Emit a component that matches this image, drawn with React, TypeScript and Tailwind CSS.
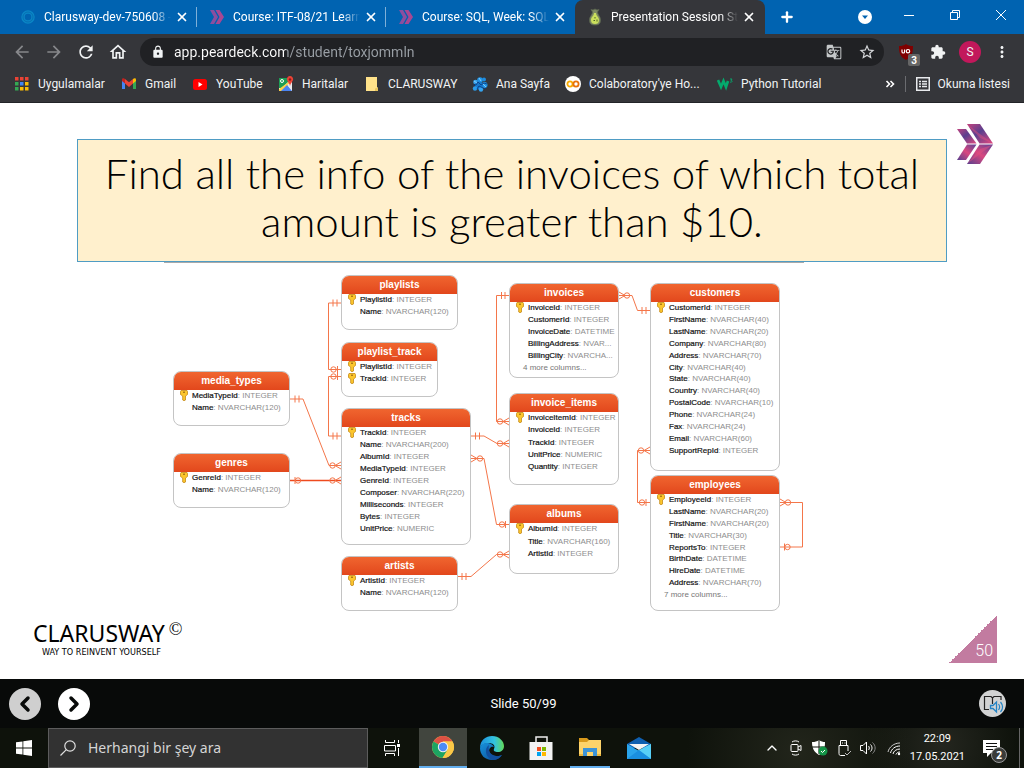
import React, { type ReactNode } from 'react';
import { X, Plus, ChevronUp, ChevronLeft, ChevronRight } from 'lucide-react';
import { MdArrowBack, MdArrowForward, MdRefresh, MdOutlineHome, MdLock, MdStarBorder, MdExtension, MdMoreVert, MdGTranslate } from 'react-icons/md';

type IconProps = { className?: string };

function ClarusIcon({ className = '' }: IconProps) {
  return (
    <svg viewBox="0 0 36 40" className={className} aria-hidden="true">
      <defs>
        <linearGradient id="cwA" x1="0" y1="0" x2="1" y2="1">
          <stop offset="0" stopColor="#c2437f" />
          <stop offset="0.45" stopColor="#5a3f8e" />
          <stop offset="1" stopColor="#e0487f" />
        </linearGradient>
        <linearGradient id="cwB" x1="1" y1="0" x2="0" y2="1">
          <stop offset="0" stopColor="#5c4296" />
          <stop offset="0.5" stopColor="#d9487f" />
          <stop offset="1" stopColor="#55408f" />
        </linearGradient>
      </defs>
      <path d="M10 0h13l13 19.5H22.5z" fill="url(#cwA)" />
      <path d="M22.5 20.5H36L23 40H10z" fill="url(#cwB)" />
      <path d="M0 5h9l10.500 14.500H10z" fill="url(#cwA)" />
      <path d="M10 20.500h9.500L9 36H0z" fill="url(#cwB)" />
      <path d="M10 0l13 10 13 9.500L23 14z" fill="#e3507f" opacity=".45" />
      <path d="M10 40l13-15 13-4.500L23 30z" fill="#e3507f" opacity=".5" />
    </svg>
  );
}

function TabChevrons() {
  return (
    <svg viewBox="0 0 16 16" className="size-4" aria-hidden="true">
      <path d="M1 1h4l4 7-4 7H1l4-7z" fill="#8a4fa0" />
      <path d="M6.500 1h4l4.500 7-4.500 7h-4l4-7z" fill="#a84792" />
    </svg>
  );
}

function PearIcon() {
  return (
    <svg viewBox="0 0 16 18" className="h-[18px] w-4" aria-hidden="true">
      <path d="M5.500 4L4 1.500l2 .5 2-1 2 1 2-.5L10.500 4c0 3 3 4 3 8s-2 5-5.500 5-5.500-1-5.500-5 3-5 3-8z" fill="#7d8a62" stroke="#5a6550" strokeWidth=".8" />
      <path d="M7 5h2c0 3 3 4 3 7s-2 4-4 4-4-1-4-4 3-4 3-7z" fill="#cbe05c" />
      <path d="M8 9v1.500M10 11.500v2M6.500 12.500h1.500" stroke="#4f6426" />
    </svg>
  );
}

const tabs: { title: string; icon: ReactNode; active?: boolean; divider?: boolean }[] = [
  {
    title: 'Clarusway-dev-750608 -',
    icon: (
      <svg viewBox="0 0 16 16" className="size-4" aria-hidden="true">
        <circle cx="8" cy="8" r="5" fill="none" stroke="#0a86c6" strokeWidth="3.500" />
        <circle cx="8" cy="8" r="5" fill="none" stroke="#0669ad" strokeWidth=".8" />
      </svg>
    ),
    divider: true,
  },
  { title: 'Course: ITF-08/21 Learn', icon: <TabChevrons />, divider: true },
  { title: 'Course: SQL, Week: SQL', icon: <TabChevrons /> },
  { title: 'Presentation Session Stu', icon: <PearIcon />, active: true },
];

function TabStrip() {
  return (
    <header className="flex h-[34px] bg-[#0063b1] pl-2 text-white">
      <div role="tablist" className="flex">
        {tabs.map((t) => (
          <div
            key={t.title}
            className={
              t.active
                ? 'flex w-[190px] items-center rounded-t-lg bg-[#35363a] pl-3'
                : 'flex w-[189px] items-center pl-3'
            }
          >
            {t.icon}
            <button role="tab" aria-selected={!!t.active} className="ml-2 w-[127px] text-left text-xs whitespace-nowrap [mask-image:linear-gradient(to_right,black_86%,transparent)]">
              {t.title}
            </button>
            <button aria-label="Close tab" className="ml-1">
              <X className="size-3.5" strokeWidth={3} />
            </button>
            {t.divider && <span className="ml-auto h-5 w-px bg-[#7fb0d8]" />}
          </div>
        ))}
      </div>
      <button aria-label="New tab" className="ml-[14px]">
        <Plus className="size-4" strokeWidth={3.500} />
      </button>
      <div className="ml-auto flex items-center">
        <button aria-label="Search tabs" className="mr-[14px]">
          <svg viewBox="0 0 14 14" className="size-3.5">
            <circle cx="7" cy="7" r="7" fill="#fff" />
            <path d="M4 5.500h6L7 9z" fill="#0063b1" />
          </svg>
        </button>
        <button aria-label="Minimize" className="flex w-[46px] justify-center pb-1">
          <svg viewBox="0 0 10 10" className="size-2.5"><path d="M0 5.500h10" stroke="#fff" /></svg>
        </button>
        <button aria-label="Restore" className="flex w-[46px] justify-center pb-1">
          <svg viewBox="0 0 10 10" className="size-2.5" fill="none" stroke="#fff"><path d="M.5 2.500h7v7h-7zM2.500 2.500v-2h7v7h-2" /></svg>
        </button>
        <button aria-label="Close" className="flex w-[46px] justify-center pb-1">
          <svg viewBox="0 0 10 10" className="size-2.5" stroke="#fff"><path d="M0 0l10 10M10 0L0 10" /></svg>
        </button>
      </div>
    </header>
  );
}

function Toolbar() {
  return (
    <div className="flex h-9 items-center bg-[#35363a] pr-[13px] pl-3 text-[#f1f3f4]">
      <div className="flex gap-3">
        <button aria-label="Back" className="text-[#87888b]"><MdArrowBack className="size-5" /></button>
        <button aria-label="Forward" className="text-[#87888b]"><MdArrowForward className="size-5" /></button>
        <button aria-label="Reload"><MdRefresh className="size-5" /></button>
        <button aria-label="Home"><MdOutlineHome className="size-5" /></button>
      </div>
      <div className="ml-3 flex h-7 grow items-center rounded-full bg-[#202124] pr-2 pl-[11px]">
        <MdLock className="size-[14px]" />
        <input
          aria-label="Address"
          readOnly
          value="app.peardeck.com/student/toxjommln"
          className="ml-[9px] min-w-0 grow bg-[linear-gradient(to_right,#ffffff_112px,#9aa0a6_112px)] bg-clip-text text-sm text-transparent outline-none"
        />
        <button aria-label="Translate" className="mr-4 text-[#c4c7c9]"><MdGTranslate className="size-4" /></button>
        <button aria-label="Bookmark" className="text-[#d5d7da]"><MdStarBorder className="size-[18px]" /></button>
      </div>
      <button aria-label="uBlock Origin, 3 blocked" className="relative ml-[14px]">
        <svg viewBox="0 0 16 16" className="size-4" aria-hidden="true">
          <path d="M8 0c2 1.500 4 2 7 2 0 7-1 11-7 14C2 13 1 9 1 2c3 0 5-.5 7-2z" fill="#800000" />
          <path d="M4 5.500v2.200a1.300 1.300 0 0 0 2.600 0V5.500" fill="none" stroke="#fff" strokeWidth="1.200" />
          <circle cx="10" cy="7.200" r="1.700" fill="none" stroke="#fff" strokeWidth="1.200" />
        </svg>
        <span className="absolute top-[10px] left-[10px] flex h-3 w-3 items-center justify-center rounded-xs bg-[#666] text-[10px] font-bold text-white">3</span>
      </button>
      <button aria-label="Extensions" className="ml-4"><MdExtension className="size-4" /></button>
      <button aria-label="Profile" className="ml-[13px] flex size-[22px] items-center justify-center rounded-full bg-[#c2185b] text-xs">S</button>
      <button aria-label="Menu" className="ml-3"><MdMoreVert className="size-[18px]" /></button>
    </div>
  );
}

const appColors = ['#ea4335', '#ea4335', '#ea4335', '#34a853', '#4285f4', '#fbbc05', '#34a853', '#fbbc05', '#fbbc05'];

const bookmarks: { label: string; width: string; icon: ReactNode }[] = [
  {
    label: 'Uygulamalar',
    width: 'w-[107px]',
    icon: (
      <svg viewBox="0 0 16 16" className="size-4">
        {appColors.map((c, i) => (
          <rect key={i} x={1 + (i % 3) * 5} y={1 + Math.floor(i / 3) * 5} width="3.500" height="3.500" fill={c} />
        ))}
      </svg>
    ),
  },
  {
    label: 'Gmail',
    width: 'w-[71px]',
    icon: (
      <svg viewBox="0 0 16 16" className="size-4">
        <path d="M1 4v9h3V6z" fill="#4285f4" />
        <path d="M15 4v9h-3V6z" fill="#34a853" />
        <path d="M1 5V3.500C1 2 3 2 4 3v4.500z" fill="#c5221f" />
        <path d="M15 5V3.500C15 2 13 2 12 3v4.500z" fill="#fbbc04" />
        <path d="M4 3l4 3.200L12 3v4.500L8 11 4 7.500z" fill="#ea4335" />
      </svg>
    ),
  },
  {
    label: 'YouTube',
    width: 'w-[86px]',
    icon: (
      <svg viewBox="0 0 16 16" className="size-4">
        <rect x="1" y="3" width="14" height="11" rx="2.500" fill="#f00" />
        <path d="M6.500 6v5l4-2.500z" fill="#fff" />
      </svg>
    ),
  },
  {
    label: 'Haritalar',
    width: 'w-[86px]',
    icon: (
      <svg viewBox="0 0 16 16" className="size-4">
        <path d="M1 2h13v13H1z" fill="#e8eaed" />
        <path d="M1 2h9v4L4 12H1z" fill="#1e9e57" />
        <path d="M1 13L12 5l2 1L4 15H1z" fill="#fdd04b" />
        <path d="M3 15l6-6 5 6z" fill="#4a84f3" />
        <path d="M9.500 8.500L14 6v8.500z" fill="#e8eaed" />
        <path d="M12 0a3.200 3.200 0 0 1 3 4c-.5 2-2.500 3-3 6-.5-3-2.500-4-3-6a3.200 3.200 0 0 1 3-4z" fill="#ea4335" />
        <circle cx="12" cy="3.500" r="1.200" fill="#8e1a1a" />
        <circle cx="4" cy="5" r="1.500" fill="none" stroke="#fff" />
      </svg>
    ),
  },
  {
    label: 'CLARUSWAY',
    width: 'w-[108px]',
    icon: (
      <svg viewBox="0 0 16 16" className="size-4">
        <path d="M2 1h11v10l1 1v3H2z" fill="#ffe28a" />
        <path d="M11 15v-2.500l3-1V15z" fill="#e8c55e" />
      </svg>
    ),
  },
  {
    label: 'Ana Sayfa',
    width: 'w-[93px]',
    icon: (
      <svg viewBox="0 0 16 16" className="size-4">
        <circle cx="8" cy="4" r="2.800" fill="#2196e8" />
        <circle cx="12" cy="3.500" r="2" fill="#1e8ce0" />
        <circle cx="3.500" cy="6" r="2.300" fill="#35a4f0" />
        <circle cx="12.500" cy="9" r="3" fill="#2196e8" />
        <circle cx="7" cy="9.500" r="4" fill="#1678cc" />
        <circle cx="3" cy="12.500" r="2.200" fill="#2a9bea" />
        <circle cx="9" cy="13.500" r="2.200" fill="#35a4f0" />
        <path d="M1 9h3l2-3 3 3 3-2 3 1M5 13l2-3 4 2 3 1" stroke="#0a3f86" fill="none" strokeWidth=".9" />
        <path d="M7 2l2 3M2 5l3 2M11 8l3 3" stroke="#8fd0fa" strokeWidth=".9" />
      </svg>
    ),
  },
  {
    label: "Colaboratory'ye Ho...",
    width: 'w-[152px]',
    icon: (
      <svg viewBox="0 0 16 16" className="size-4">
        <circle cx="8" cy="8" r="8" fill="#fff" />
        <circle cx="5" cy="8" r="2.600" fill="none" stroke="#f9ab00" strokeWidth="1.800" />
        <circle cx="11" cy="8" r="2.600" fill="none" stroke="#e8710a" strokeWidth="1.800" />
      </svg>
    ),
  },
  {
    label: 'Python Tutorial',
    width: 'w-[110px]',
    icon: (
      <svg viewBox="0 0 16 16" className="size-4" fill="none" stroke="#04aa6d">
        <path d="M1 4l3 7 2.500-6L9 11l2-6" strokeWidth="2.600" />
        <path d="M13 3h2l-1 1.500c2 0 1 2.500-1 1.500" strokeWidth=".9" />
      </svg>
    ),
  },
];

function BookmarksBar() {
  return (
    <nav aria-label="Bookmarks" className="flex h-[33px] items-center border-b border-[#232428] bg-[#35363a] px-[14px] pb-1 text-xs text-[#f1f3f4]">
      {bookmarks.map((b) => (
        <a key={b.label} href="#" className={`flex shrink-0 items-center gap-2 whitespace-nowrap ${b.width}`}>
          {b.icon}
          {b.label}
        </a>
      ))}
      <button aria-label="More bookmarks" className="ml-auto">
        <svg viewBox="0 0 10 10" className="size-2.5" fill="none" stroke="#fff" strokeWidth="1.600"><path d="M1.500 2l3 3-3 3M5.500 2l3 3-3 3" /></svg>
      </button>
      <span className="mx-[10px] h-4 w-px bg-[#6b6c70]" />
      <button className="flex items-center gap-2">
        <svg viewBox="0 0 14 14" className="size-3.5" fill="none" stroke="#e8eaed">
          <rect x=".75" y=".75" width="12.500" height="12.500" strokeWidth="1.500" />
          <path d="M3 4.500h2M6 4.500h5M3 7h2M6 7h5M3 9.500h2M6 9.500h5" strokeWidth="1.400" />
        </svg>
        Okuma listesi
      </button>
    </nav>
  );
}

type Entity = { name: string; box: string; pad: string; keys: number; cols: string[]; more?: string };

const entities: Entity[] = [
  { name: 'playlists', box: 'left-[177px] top-[12px] w-[117px] h-[55px]', pad: 'pb-3', keys: 1, cols: ['PlaylistId:INTEGER', 'Name:NVARCHAR(120)'] },
  { name: 'playlist_track', box: 'left-[177px] top-[79px] w-[97px] h-[55px]', pad: 'pb-3', keys: 2, cols: ['PlaylistId:INTEGER', 'TrackId:INTEGER'] },
  { name: 'media_types', box: 'left-[9px] top-[108px] w-[117px] h-[55px]', pad: 'pb-3', keys: 1, cols: ['MediaTypeId:INTEGER', 'Name:NVARCHAR(120)'] },
  { name: 'genres', box: 'left-[9px] top-[190px] w-[117px] h-[55px]', pad: 'pb-3', keys: 1, cols: ['GenreId:INTEGER', 'Name:NVARCHAR(120)'] },
  {
    name: 'tracks', box: 'left-[177px] top-[145px] w-[130px] h-[137px]', pad: 'pb-[10px]', keys: 1,
    cols: ['TrackId:INTEGER', 'Name:NVARCHAR(200)', 'AlbumId:INTEGER', 'MediaTypeId:INTEGER', 'GenreId:INTEGER', 'Composer:NVARCHAR(220)', 'Milliseconds:INTEGER', 'Bytes:INTEGER', 'UnitPrice:NUMERIC'],
  },
  { name: 'artists', box: 'left-[177px] top-[293px] w-[117px] h-[55px]', pad: 'pb-3', keys: 1, cols: ['ArtistId:INTEGER', 'Name:NVARCHAR(120)'] },
  {
    name: 'invoices', box: 'left-[345px] top-[20px] w-[110px] h-[95px]', pad: 'pb-[4px]', keys: 1,
    cols: ['InvoiceId:INTEGER', 'CustomerId:INTEGER', 'InvoiceDate:DATETIME', 'BillingAddress:NVAR...', 'BillingCity:NVARCHA...'], more: '4 more columns...',
  },
  {
    name: 'invoice_items', box: 'left-[345px] top-[130px] w-[110px] h-[92px]', pad: 'pb-3', keys: 1,
    cols: ['InvoiceItemId:INTEGER', 'InvoiceId:INTEGER', 'TrackId:INTEGER', 'UnitPrice:NUMERIC', 'Quantity:INTEGER'],
  },
  { name: 'albums', box: 'left-[345px] top-[241px] w-[110px] h-[70px]', pad: 'pb-[14px]', keys: 1, cols: ['AlbumId:INTEGER', 'Title:NVARCHAR(160)', 'ArtistId:INTEGER'] },
  {
    name: 'customers', box: 'left-[486px] top-[20px] w-[130px] h-[188px]', pad: 'pb-[14px]', keys: 1,
    cols: ['CustomerId:INTEGER', 'FirstName:NVARCHAR(40)', 'LastName:NVARCHAR(20)', 'Company:NVARCHAR(80)', 'Address:NVARCHAR(70)', 'City:NVARCHAR(40)', 'State:NVARCHAR(40)', 'Country:NVARCHAR(40)', 'PostalCode:NVARCHAR(10)', 'Phone:NVARCHAR(24)', 'Fax:NVARCHAR(24)', 'Email:NVARCHAR(60)', 'SupportRepId:INTEGER'],
  },
  {
    name: 'employees', box: 'left-[486px] top-[212px] w-[130px] h-[136px]', pad: 'pb-[10px]', keys: 1,
    cols: ['EmployeeId:INTEGER', 'LastName:NVARCHAR(20)', 'FirstName:NVARCHAR(20)', 'Title:NVARCHAR(30)', 'ReportsTo:INTEGER', 'BirthDate:DATETIME', 'HireDate:DATETIME', 'Address:NVARCHAR(70)'], more: '7 more columns...',
  },
];

function KeyIcon() {
  return (
    <svg viewBox="0 0 8 11" className="h-[11px] w-2 shrink-0" aria-hidden="true">
      <path d="M1 .5h6l.5 1v3L5.500 6v4L4 10.700 2.700 10V6L.5 4.500v-3z" fill="#fcc62c" stroke="#c48a1a" strokeWidth=".8" />
      <path d="M3 2.200h2" stroke="#8a5a10" />
    </svg>
  );
}

function EntityCard({ e }: { e: Entity }) {
  return (
    <section className={`absolute flex flex-col overflow-hidden rounded-lg border border-[#c4c4c4] bg-white ${e.box}`}>
      <h2 className="h-[18px] shrink-0 bg-linear-to-b from-[#f0652f] to-[#e2471c] text-center text-[10px] leading-[18px] font-bold text-white">{e.name}</h2>
      <ul className={`flex grow flex-col justify-between text-[8px] leading-[11px] whitespace-nowrap text-[#8e8e8e] ${e.pad}`}>
        {e.cols.map((c, i) => {
          const [name, type] = c.split(':');
          return (
            <li key={c} className="flex pl-1.5">
              <span className="w-3 shrink-0">{i < e.keys && <KeyIcon />}</span>
              <span><span className="text-[#111] [-webkit-text-stroke:0.2px_#111]">{name}</span>: {type}</span>
            </li>
          );
        })}
        {e.more && <li className="pl-[13px] text-[#777]">{e.more}</li>}
      </ul>
    </section>
  );
}

/* Relationship lines and the marks at their ends. */
const lines = [
  'M341 303H328.500V369.500H341', 'M341 376.500H328.500V436H341', 'M290 399H303L329 465.500H341', 'M471 436H484L497 443.500H509',
  'M471 458.500H484L496.500 524.500H509', 'M458 576.500H471L496.500 554.500H509', 'M509 295.500H496.500V421.500H509',
  'M619 295.500H632L637.500 310.500H650', 'M650 450.500H637.500V502.500H650', 'M780 502.500H802.500V547H780',
];
const ticks: [number, number][] = [
  [333, 303], [337, 303], [333, 436], [337, 436], [295, 399], [299, 399], [295, 480.5], [475.5, 436], [479.5, 436],
  [505.5, 524.5], [462, 576.5], [466, 576.5], [501.5, 295.5], [505, 295.5], [642, 310.5], [646, 310.5], [646, 502.5], [784.5, 547], [337.5, 369.5], [337.5, 376.5],
];
const circles: [number, number][] = [
  [333.5, 369.5], [333.5, 376.5], [332.5, 465.5], [298, 480.5], [332.5, 480.5], [500, 443.5], [480, 458.5], [502, 524.5],
  [500, 554.5], [500, 421.5], [627, 295.5], [641, 450.5], [642, 502.5], [788, 502.5], [787.5, 547],
];
const feet: [number, number, number][] = [
  [341, 465.5, -1], [341, 480.5, -1], [509, 443.5, -1], [471, 458.5, 1], [509, 554.5, -1], [509, 421.5, -1], [619, 295.5, 1], [650, 450.5, -1], [780, 502.5, 1],
];

function Diagram() {
  return (
    <div className="relative mr-auto ml-[87px] h-[353px] w-[640px] border-t border-[#a9a9a9]">
      <svg viewBox="164 263 640 352" className="absolute inset-0 size-full" fill="none" stroke="#f4764a" aria-hidden="true">
        {lines.map((d) => <path key={d} d={d} />)}
        <path d="M290 480.500H341" stroke="#ee4a1e" strokeWidth="1.400" />
        {ticks.map(([x, y]) => <path key={`${x}-${y}`} d={`M${x} ${y - 3.5}v7`} />)}
        {circles.map(([x, y]) => <circle key={`${x}-${y}`} cx={x} cy={y} r="2.700" />)}
        {feet.map(([x, y, s]) => <path key={`${x}-${y}`} d={`M${x} ${y - 3.5}L${x + s * 6} ${y}L${x} ${y + 3.5}`} />)}
      </svg>
      {entities.map((e) => <EntityCard key={e.name} e={e} />)}
    </div>
  );
}

function Slide() {
  return (
    <main className="relative flex grow flex-col bg-white pt-9 font-['Liberation_Sans',sans-serif]">
      <ClarusIcon className="absolute top-[21px] right-[31px] h-10 w-9" />
      <div className="mx-[77px]">
        <h1 className="flex h-[123px] items-center justify-center border border-[#4f9cc4] bg-[#fff0cd] pb-2 text-center font-['Lato',sans-serif] text-[42px] leading-[48px] font-light text-black">
          <span>Find all the info of the invoices of which total<br />amount is greater than $10.</span>
        </h1>
        <Diagram />
      </div>
      <footer className="flex h-16 items-start justify-between pr-[27px] pl-[33px]">
        <div className="pt-1 text-black">
          <p className="flex items-start font-['Noto_Sans',sans-serif] text-[23px] leading-7">CLARUSWAY<span className="ml-[4px] font-['Liberation_Serif',serif] text-[18px] leading-5">©</span></p>
          <p className="pl-[9px] font-['DejaVu_Sans_Condensed','DejaVu_Sans',sans-serif] text-[9px] leading-[10px]">WAY TO REINVENT YOURSELF</p>
        </div>
        <div className="flex size-12 items-end justify-end bg-[linear-gradient(to_bottom_right,transparent_50%,#c27ba0_50%)] pr-1 pb-[2px] font-['Roboto',sans-serif] text-base leading-5 font-light text-white">50</div>
      </footer>
    </main>
  );
}

function DeckBar() {
  return (
    <div className="flex h-[49px] items-center bg-[#080a09] pr-[18px] pl-[9px]">
      <div className="flex flex-1 gap-[17px] text-[#080a09]">
        <button aria-label="Previous slide" className="flex size-8 items-center justify-center rounded-full bg-[#cfcfcf]"><ChevronLeft className="size-6" strokeWidth={3.500} /></button>
        <button aria-label="Next slide" className="flex size-8 items-center justify-center rounded-full bg-white"><ChevronRight className="size-6" strokeWidth={3.500} /></button>
      </div>
      <p className="pl-8 text-[13px] text-white">Slide 50/99</p>
      <div className="flex flex-1 justify-end">
        <button aria-label="Immersive reader">
          <svg viewBox="0 0 27 27" className="size-[27px]" fill="none">
            <circle cx="13.500" cy="13.500" r="13.500" fill="#d2d3d3" />
            <path d="M10 19.500H5.500V6.500h6.500l1.500 1.500 1.500-1.500h7V10M13.500 8v6" stroke="#222" strokeWidth="1.200" />
            <path d="M11.500 15.500h2.500l3.500-3.500v10l-3.500-3.500h-2.500z" stroke="#2384c6" strokeWidth="1.300" />
            <path d="M19.500 14c1.500 2 1.500 4 0 6M21.500 12c2.500 3 2.500 7 0 10" stroke="#2384c6" strokeWidth="1.200" />
          </svg>
        </button>
      </div>
    </div>
  );
}

function Taskbar() {
  return (
    <div className="flex h-10 items-center bg-[#0e120b] bg-[radial-gradient(circle_at_78%_60%,#22251b_0,transparent_14%),radial-gradient(circle_at_92%_40%,#24261f_0,transparent_8%)] font-['Noto_Sans',sans-serif] text-white">
      <button aria-label="Start" className="flex h-full w-12 items-center justify-center">
        <svg viewBox="0 0 16 16" className="size-4" fill="#fff"><path d="M0 2.300L6.500 1.400v6.200H0zM7.300 1.300L16 0v7.600H7.300zM0 8.400h6.500v6.200L0 13.700zM7.300 8.400H16V16l-8.700-1.300z" /></svg>
      </button>
      <label className="flex h-full w-80 items-center gap-3 border border-[#5c5c5c] bg-[#323232] pl-[11px]">
        <svg viewBox="0 0 16 16" className="size-4 shrink-0" fill="none" stroke="#e0e0e0" strokeWidth="1.200"><circle cx="10" cy="6" r="5.200" /><path d="M6.300 9.700L.5 15.500" /></svg>
        <input aria-label="Search" placeholder="Herhangi bir şey ara" className="min-w-0 grow bg-transparent text-sm outline-none placeholder:text-[#d5d5d5]" />
      </label>
      <button aria-label="Task view" className="flex w-[51px] items-center pl-4">
        <svg viewBox="0 0 18 16" className="h-4 w-[18px]" fill="none" stroke="#fff"><path d="M1.500 0v2.500h9V0M1.500 16v-2.500h9V16M.5 5.500h11v5.500h-11zM14.500 0v3M14.500 8v8" /><path d="M13 4h3v3h-3z" fill="#fff" stroke="none" /></svg>
      </button>
      <button aria-label="Chrome" className="flex h-full w-12 items-center justify-center border-b-2 border-[#62aeee] bg-[#41453e]">
        <svg viewBox="0 0 24 24" className="size-6">
          <circle cx="12" cy="12" r="11" fill="#fbc847" />
          <path d="M12 12L2.500 6.500A11 11 0 0 1 21.500 6.500H12z" fill="#dd5144" />
          <path d="M12 12L2.500 6.500A11 11 0 0 0 11.500 23L17 14.500z" fill="#1da462" />
          <path d="M12 6.500h9.500A11 11 0 0 1 11.500 23L17 14z" fill="#fbc847" />
          <circle cx="12" cy="12" r="5.200" fill="#f1f1f1" />
          <circle cx="12" cy="12" r="4.200" fill="#4c8bf5" />
        </svg>
      </button>
      <button aria-label="Edge" className="flex h-full w-[50px] items-center justify-center">
        <svg viewBox="0 0 24 24" className="size-6">
          <defs>
            <linearGradient id="edT" x1="0" x2="1"><stop offset="0" stopColor="#1b8fdc" /><stop offset=".6" stopColor="#33c3e0" /><stop offset="1" stopColor="#63d957" /></linearGradient>
            <linearGradient id="edB" x1="0" x2="1" y2="1"><stop offset="0" stopColor="#1792dc" /><stop offset="1" stopColor="#0c4a94" /></linearGradient>
          </defs>
          <path d="M0 12C0 4 6 0 12 0c7 0 12 5 12 10 0 4-3 6-6 6-3 0-5-1-4-3 2-4-2-6-5-6C5 7 1 9 0 12z" fill="url(#edT)" />
          <path d="M0 12c1-4 5-5.500 8-5 3 .4 5 2 6 4-5-2-8 7 1 9 3 .8 5-.2 7-1-2 3-6 5-10 5C5 24 0 19 0 12z" fill="url(#edB)" />
          <path d="M9 9c-5 3-4 13 4 15 4 0 7-2 9-5-3 1.500-6 1.500-9 0-4-2-5-6-4-10z" fill="#114f9e" />
        </svg>
      </button>
      <button aria-label="Store" className="flex h-full w-12 items-center justify-center">
        <svg viewBox="0 0 24 24" className="size-6">
          <path d="M7 7V1h11v6" fill="none" stroke="#eee" strokeWidth="1.500" />
          <path d="M.5 6h23v18H.5z" fill="#f3f3f3" />
          <path d="M8 11h4v4H8z" fill="#f25022" /><path d="M13 11h4v4h-4z" fill="#7fba00" /><path d="M8 16h4v4H8z" fill="#00a4ef" /><path d="M13 16h4v4h-4z" fill="#ffb900" />
        </svg>
      </button>
      <button aria-label="File Explorer" className="mx-[5px] flex h-full w-10 items-center justify-center border-b-2 border-[#62aeee]">
        <svg viewBox="0 0 24 24" className="size-6">
          <path d="M1 3h8l2 2h12v4H1z" fill="#d99a1c" />
          <path d="M1 7h8l2-2h12v16H1z" fill="#fdd36a" />
          <path d="M5 21v-8h14v8h-4v-4H9v4z" fill="#3c93d6" />
          <path d="M1 19h4v2H1zM19 19h4v2h-4z" fill="#e8b53e" />
        </svg>
      </button>
      <button aria-label="Mail" className="flex h-full w-12 items-center justify-center">
        <svg viewBox="0 0 24 24" className="size-6">
          <path d="M0 8l12-7 12 7v4H0z" fill="#0f5fb0" />
          <path d="M0 8l12 7 12-7v15H0z" fill="#2aa4ec" />
          <path d="M2 8h20l-10 6z" fill="#f4f4f4" />
          <path d="M24 8v15L11 14.500z" fill="#58d0f7" />
          <path d="M0 23l12-9 12 9z" fill="#1a8fe0" />
        </svg>
      </button>
      <div className="ml-auto flex h-full items-center">
        <button aria-label="Show hidden icons" className="mr-2"><ChevronUp className="size-4" strokeWidth={2} /></button>
        <div className="mr-2 flex items-center gap-2">
          <svg viewBox="0 0 16 16" className="size-4" fill="none" stroke="#fff"><rect x="3" y="4.500" width="7" height="7" rx="1" /><path d="M10 7l3-1.500v5L10 9M4 2c2-1.500 5-1.500 7 0M4 14c2 1.500 5 1.500 7 0" /></svg>
          <svg viewBox="0 0 16 16" className="size-4"><path d="M7 0c2 1.500 4 2 6 2 0 6-1 10-6 13C2 12 0 8 0 2c3 0 5-.5 7-2z" fill="#fff" /><path d="M7 0v14M0 7h13" stroke="#0e120b" /><circle cx="11" cy="11" r="4.500" fill="#149447" /><path d="M9 11l1.500 1.500L13 10" fill="none" stroke="#fff" /></svg>
          <svg viewBox="0 0 16 16" className="size-4" fill="none" stroke="#fff"><path d="M4.500 5.500V.5h6v5M3 5.500h9V11M3 5.500v8c0 1 .5 2 1.500 2H9M6 3h1M8.500 3h1" /><path d="M9 13l2 2 4-4" stroke="#bbb" /></svg>
          <svg viewBox="0 0 16 16" className="size-4" fill="none" stroke="#fff"><path d="M.5 5.500H3l3.500-3.500v12L3 10.500H.5zM8.500 6c1 1 1 3 0 4M10.500 4.500c2 2 2 5 0 7" /><path d="M12.500 2.500c3.500 3 3.500 8 0 11" stroke="#888" /></svg>
          <svg viewBox="0 0 16 16" className="ml-[2px] size-4" fill="none" stroke="#fff"><path d="M2 12C3 7 8 3 14 3" stroke="#ccc" /><path d="M4.500 13C5.500 9 9 6 14 6M7 14c.5-3 3.500-5 7-5M10 14.500c.5-1.500 2-2.500 4-2.500" /><circle cx="13" cy="14" r="1.200" fill="#fff" stroke="none" /></svg>
        </div>
        <time className="text-center font-['Roboto',sans-serif] text-[11px] leading-[18px]">22:09<br />17.05.2021</time>
        <button aria-label="Notifications, 2 new" className="relative ml-[18px]">
          <svg viewBox="0 0 24 24" className="size-6"><path d="M0 4h17v13H8l-4 4v-4H0z" fill="#fff" /><path d="M3 7.500h11M3 10.500h11M3 13.500h7" stroke="#111" strokeWidth="1.200" /></svg>
          <span className="absolute top-[11px] left-[8px] flex size-4 items-center justify-center rounded-full border border-[#999] bg-[#3a3c3a] text-[10px] font-bold">2</span>
        </button>
        <span className="mr-1 ml-3 h-full w-px bg-[#666]" />
      </div>
    </div>
  );
}

export default function App() {
  return (
    <div className="flex min-h-screen flex-col bg-white font-['Roboto',sans-serif]">
      <TabStrip />
      <Toolbar />
      <BookmarksBar />
      <Slide />
      <DeckBar />
      <Taskbar />
    </div>
  );
}
